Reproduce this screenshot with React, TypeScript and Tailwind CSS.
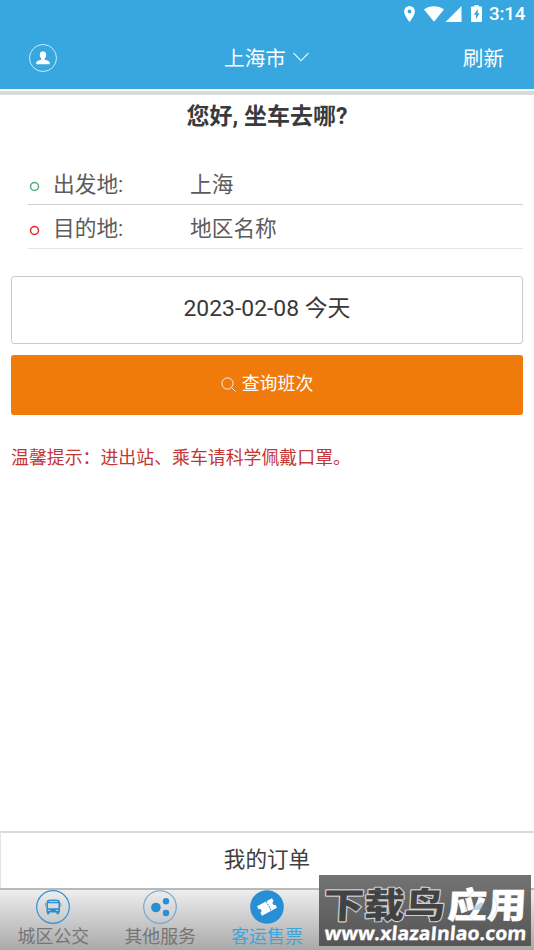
import React from "react";

function StatusBar() {
  return (
    <div className="flex h-7 items-center justify-end pr-[9px]">
      <svg className="h-4 w-[11px]" viewBox="0 0 11 16" fill="white">
        <path fillRule="evenodd" d="M5.5 0A5.4 5.4 0 0 0 .1 5.4C.1 9.400 5.500 16 5.500 16s5.400-6.600 5.400-10.600A5.400 5.400 0 0 0 5.500 0Zm0 3.600a1.900 1.900 0 1 1 0 3.800a1.900 1.900 0 0 1 0-3.800Z" />
      </svg>
      <svg className="ml-[9px] h-4 w-5" viewBox="0 0 20 16" fill="white">
        <path d="M0 3.500C5.800-.8 14.200-.8 20 3.500L10 15.800Z" />
      </svg>
      <svg className="ml-[1px] h-4 w-[17px]" viewBox="0 0 17 16" fill="white">
        <path d="M16.500 0V16H.5Z" />
      </svg>
      <svg className="mt-[-2px] ml-[9px] h-[17px] w-[11px]" viewBox="0 0 11 17">
        <path fill="white" d="M3.400 0h4.200v1.600H10q1 0 1 1V16q0 1-1 1H1q-1 0-1-1V2.600q0-1 1-1h2.400Z" />
        <path fill="#38a6df" d="M6.700 4 2.800 9.800h2.100v4.500l3.700-6.100H6.700Z" />
      </svg>
      <span className="ml-[7px] w-[36px] text-[18.800px] leading-7 font-medium tracking-[-0.2px] whitespace-nowrap text-white">3:14</span>
    </div>
  );
}

function Header() {
  return (
    <header className="h-[89px] shrink-0 bg-[#38a6df] text-white">
      <StatusBar />
      <div className="grid h-[60px] grid-cols-3 items-center pr-[30px] pl-[29px]">
        <svg className="h-7 w-7" viewBox="0 0 28 28">
          <circle cx="14" cy="14" r="13.500" fill="none" stroke="#c3effd" strokeWidth="1" />
          <path fill="white" d="M14 7.300c-2 0-3.200 1.300-3.200 3.500 0 1.600.6 2.900 1.500 3.700v1.300c-2.800.7-5.200 1.700-5.200 3.200v1.300h13.800V19c0-1.500-2.400-2.500-5.200-3.200v-1.300c.9-.8 1.500-2.100 1.500-3.700 0-2.200-1.200-3.500-3.400-3.500Z" />
        </svg>
        <div className="flex items-center justify-center">
          <span className="pt-[2px] text-[20.600px] leading-[30px]">上海市</span>
          <svg className="mt-[-2px] ml-[7px] h-[10px] w-4" viewBox="0 0 16 10" fill="none" stroke="white" strokeOpacity=".85" strokeWidth="1.100">
            <path d="m.5 1 7.500 7.700L15.500 1" />
          </svg>
        </div>
        <span className="pt-[2px] text-right text-[20.600px] leading-[30px]">刷新</span>
      </div>
    </header>
  );
}

function PlaceRow({ label, value, dot, line }: { label: string; value: string; dot: string; line: string }) {
  return (
    <div className={`ml-7 mr-[11px] flex h-[44px] items-center border-b pt-[5px] text-[21.700px] leading-8 text-[#5c5c5c] ${line}`}>
      <svg className={`mt-[3px] ml-[1px] h-[11px] w-[11px] ${dot}`} viewBox="0 0 11 11">
        <circle cx="5.500" cy="5.500" r="4" fill="none" stroke="currentColor" strokeWidth="1.500" />
      </svg>
      <span className="ml-[13px] w-[137px]">{label}</span>
      <span>{value}</span>
    </div>
  );
}

function BusIcon() {
  return (
    <svg className="h-[34px] w-[34px]" viewBox="0 0 34 34">
      <circle cx="17" cy="17" r="16.300" fill="none" stroke="#3294d6" strokeWidth="1.200" />
      <g fill="#298fd4">
        <path fillRule="evenodd" d="M12.500 9.800Q17 9 22 9.800 24 10.200 24 12.300V22.500H23V24.200H20.500V22.500H13.500V24.200H11V22.500H10.500V12.300Q10.500 10.200 12.500 9.800ZM12.800 11v.8h9v-.8ZM12 13.300v5h10.500v-5ZM12.200 19.700v1.200h2v-1.200ZM20.300 19.700v1.200h2v-1.200Z" />
        <path d="M9.300 13h.7v3.500h-.7zM24.500 13h.7v3.500h-.7z" />
      </g>
    </svg>
  );
}

function ServicesIcon() {
  return (
    <svg className="h-[34px] w-[34px]" viewBox="0 0 34 34">
      <circle cx="17" cy="17" r="16.300" fill="none" stroke="#63a8d9" strokeWidth="1.100" />
      <g fill="#298fd4">
        <circle cx="12.900" cy="17.500" r="4.800" />
        <circle cx="23" cy="11.300" r="3.200" />
        <circle cx="23" cy="23" r="3.200" />
      </g>
    </svg>
  );
}

function TicketIcon() {
  return (
    <svg className="h-[34px] w-[34px]" viewBox="0 0 34 34">
      <circle cx="17" cy="17" r="16.800" fill="#298fd4" />
      <g transform="rotate(-28 17 17)">
        <path fill="white" d="M8.500 11.700h17v3.300a2 2 0 0 0 0 4v3.300h-17V19a2 2 0 0 0 0-4Z" />
        <path fill="none" stroke="#298fd4" strokeWidth="1" strokeDasharray="1.800 1" d="M19 11.500v11" />
      </g>
    </svg>
  );
}

function Tab({ icon, label, active = false }: { icon: React.ReactNode; label: string; active?: boolean }) {
  return (
    <div className="flex w-[106.800px] flex-col items-center">
      {icon}
      <span className={`mt-[1px] text-[17.900px] leading-[24px] ${active ? "text-[#3da5dc]" : "text-[#757575]"}`}>{label}</span>
    </div>
  );
}

function Watermark() {
  return (
    <div className="absolute top-[875px] left-[319px] h-[71px] w-[212px] overflow-hidden bg-gradient-to-b from-[#737373] to-[#555555]">
      <svg className="block h-full w-full" viewBox="0 0 212 71">
        <g fontFamily="Noto Sans CJK SC, sans-serif" fontWeight="900" fontSize="34" strokeLinejoin="round">
          <text transform="translate(4 42.500) skewX(-3) scale(1.190 1.040)" fill="#424242" stroke="#d0d0d0" strokeWidth="2.200" paintOrder="stroke">下载鸟</text>
          <text transform="translate(128 42.500) skewX(-3) scale(1.160 1.040)" fill="white" stroke="white" strokeWidth=".4">应用</text>
        </g>
        <g fill="none" stroke="#5384a8" strokeOpacity=".4">
          <circle cx="55" cy="31" r="16" />
          <path d="M45 31h20" />
        </g>
        <circle cx="162" cy="31" r="16" fill="none" stroke="#3f83b4" strokeOpacity=".2" />
        <path d="M152 35l10-8 10 8Z" fill="#3f83b4" fillOpacity=".35" />
        <text transform="translate(5 64.500) skewX(-5)" textLength="202" lengthAdjust="spacingAndGlyphs" fill="white" stroke="white" strokeWidth=".3" fontFamily="Open Sans, sans-serif" fontWeight="700" fontSize="19">www.xlazaInlao.com</text>
      </svg>
    </div>
  );
}

export default function App() {
  return (
    <div className="relative flex h-[950px] w-[534px] flex-col overflow-hidden bg-white font-[Roboto,'Noto_Sans_CJK_SC',sans-serif]">
      <Header />
      <div className="mt-[2px] h-1 shrink-0 bg-[#dadada]" />
      <main className="flex-1">
        <h1 className="mt-[4px] text-center text-[23px] leading-9 font-bold text-[#383b3d]">您好, 坐车去哪?</h1>
        <div className="mt-[26px]">
          <PlaceRow label="出发地:" value="上海" dot="text-[#49ad7c]" line="border-[#cfcfcf]" />
          <PlaceRow label="目的地:" value="地区名称" dot="text-[#df2525]" line="border-[#e5e5e5]" />
        </div>
        <div className="mx-[11px] mt-[27px] flex h-[68px] items-center justify-center rounded-[3px] border border-[#c9c9c9] pb-[2px] text-[22.900px] text-[#383838]">2023-02-08 今天</div>
        <div className="mx-[11px] mt-[11px] flex h-[60px] items-center justify-center rounded-[3px] bg-[#f17b0a] pb-[2px] text-white">
          <svg className="mt-[1px] mr-[6px] h-[15px] w-[15px]" viewBox="0 0 15 15" fill="none" stroke="#fff0df" strokeWidth="1">
            <circle cx="6.500" cy="6.500" r="5.600" />
            <path d="m10.600 10.600 4 4" />
          </svg>
          <span className="text-[17.900px] leading-6">查询班次</span>
        </div>
        <p className="mt-[29px] ml-[11px] text-[17.900px] leading-7 text-[#c43535]">温馨提示：进出站、乘车请科学佩戴口罩。</p>
      </main>
      <div className="flex h-[57px] shrink-0 items-center justify-center border-t-2 border-l border-t-[#dadada] border-l-[#e5e5e5] pr-[1px] text-[21.600px] text-[#404040]">我的订单</div>
      <nav className="flex h-[62px] shrink-0 border-t-2 border-[#b9b9b9] bg-gradient-to-b from-[#eeeeee] to-[#a9a9a9]">
        <Tab icon={<BusIcon />} label="城区公交" />
        <Tab icon={<ServicesIcon />} label="其他服务" />
        <Tab icon={<TicketIcon />} label="客运售票" active />
      </nav>
      <Watermark />
    </div>
  );
}
